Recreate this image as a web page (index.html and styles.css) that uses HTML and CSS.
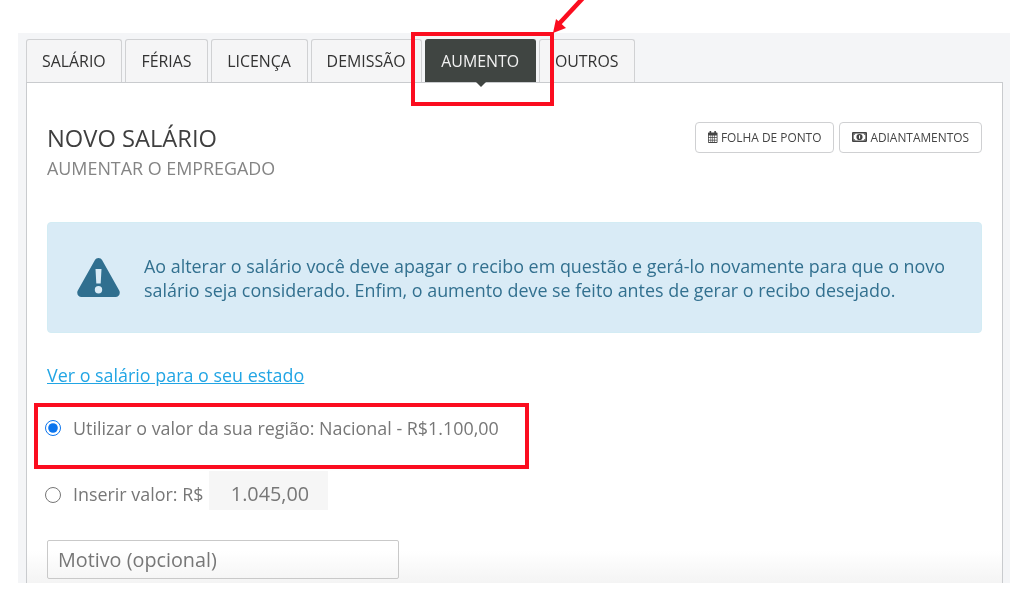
FILE: index.html
```html
<!DOCTYPE html>
<html lang="pt-BR">
<head>
<meta charset="utf-8">
<title>Novo salário</title>
<link rel="stylesheet" href="styles.css">
</head>
<body>
<div class="shell">
  <nav class="tabs">
    <a class="tab">SALÁRIO</a>
    <a class="tab">FÉRIAS</a>
    <a class="tab">LICENÇA</a>
    <a class="tab">DEMISSÃO</a>
    <a class="tab active">AUMENTO</a>
    <a class="tab">OUTROS</a>
  </nav>
  <main class="panel">
    <header class="head">
      <div>
        <h1 class="title">NOVO SALÁRIO</h1>
        <p class="subtitle">AUMENTAR O EMPREGADO</p>
      </div>
      <div class="actions">
        <button class="btn">
          <svg class="btn-icon" width="9.500" height="12" viewBox="0 0 12 13" preserveAspectRatio="none"><path fill="#444" fill-rule="evenodd" d="M2 0h2v1.500h4V0h2v1.500h1.200c.5 0 .8.300.8.800V12c0 .6-.4 1-1 1H1c-.6 0-1-.4-1-1V2.300c0-.5.300-.8.800-.8H2zM1 5v1.800h2.200V5zm3 0v1.800h1.600V5zm2.400 0v1.800H8V5zm2.400 0v1.800H11V5zM1 7.600v1.800h2.200V7.600zm3 0v1.800h1.600V7.600zm2.400 0v1.800H8V7.600zm2.400 0v1.800H11V7.600zM1 10.200V12h2.200v-1.800zm3 0V12h1.600v-1.800zm2.400 0V12H8v-1.800zm2.400 0V12H11v-1.800z"/></svg>
          FOLHA DE PONTO
        </button>
        <button class="btn">
          <svg class="btn-icon" width="15" height="10" viewBox="0 0 15 11" preserveAspectRatio="none"><path fill="#444" fill-rule="evenodd" d="M1 0h13c.6 0 1 .4 1 1v9c0 .6-.4 1-1 1H1c-.6 0-1-.4-1-1V1c0-.6.4-1 1-1zm.6 1.600v7.800h11.800V1.600z"/><ellipse cx="7.500" cy="5.500" rx="3.100" ry="3.400" fill="#444"/><rect x="7" y="3.700" width="1.100" height="3.600" fill="#fff"/><path fill="#444" d="M1.600 1.600h2.200L1.600 3.800zm11.800 0v2.200l-2.200-2.200zM1.600 9.400V7.200l2.200 2.200zm11.800 0h-2.200l2.200-2.200z"/></svg>
          ADIANTAMENTOS
        </button>
      </div>
    </header>

    <section class="alert">
      <svg class="alert-icon" width="43" height="39" viewBox="0 0 43 39"><path fill="#306f8f" fill-rule="evenodd" d="M17.800 2.200c1.700-2.900 5.700-2.900 7.400 0l17 30.300c1.600 2.900-.4 6.500-3.700 6.500H4.500C1.200 39-.8 35.400.8 32.500zM18.500 11l.8 14.500h4.400l.8-14.500zM21.500 28a3.700 3.700 0 1 0 0 7.400 3.700 3.700 0 0 0 0-7.400z"/></svg>
      <p class="alert-text">Ao alterar o salário você deve apagar o recibo em questão e gerá-lo novamente para que o novo salário seja considerado. Enfim, o aumento deve se feito antes de gerar o recibo desejado.</p>
    </section>

    <a class="state-link">Ver o salário para o seu estado</a>

    <label class="option option-region">
      <input class="radio" type="radio" name="valor" checked>
      <span>Utilizar o valor da sua região: Nacional - R$1.100,00</span>
    </label>
    <label class="option option-custom">
      <input class="radio radio-low" type="radio" name="valor">
      <span class="label-low">Inserir valor: R$</span>
      <span class="amount">1.045,00</span>
    </label>
    <div class="reason">Motivo (opcional)</div>
  </main>
</div>

<div class="mark mark-tab"></div>
<div class="mark mark-option"></div>
<svg class="arrow" width="40" height="36" viewBox="0 0 40 36"><path d="M33 -2 L7 26" stroke="#fb0d1f" stroke-width="4.500" fill="none"/><path fill="#fb0d1f" d="M3 33 L6 19 L16 28z"/></svg>
</body>
</html>
```
FILE: styles.css
```css
* { box-sizing: border-box; }
html, body { margin: 0; height: 607px; overflow: hidden; background: #fff; }
body { font-family: "Open Sans", sans-serif; padding: 33px 14px 24px 18px; position: relative; }

.shell {
  height: 550px;
  background: #f4f5f7;
  padding: 6px 7px 0 8px;
  display: flex;
  flex-direction: column;
  overflow: hidden;
  filter: blur(0.35px);
}

.tabs { display: flex; gap: 3px; height: 43px; flex: none; }
.tab {
  display: flex;
  align-items: center;
  justify-content: center;
  padding: 0 15.750px 0 15px;
  font-size: 15.900px;
  color: #333;
  background: #f5f5f6;
  border: 1px solid #d0d1d3;
  border-bottom: 0;
  border-radius: 3px 3px 0 0;
  position: relative;
}
.tab.active { background: #404542; border-color: #404542; color: #f2f2f2; }
.tab.active::after {
  content: "";
  position: absolute;
  left: 50%;
  bottom: -5px;
  margin-left: -5px;
  border: 5px solid transparent;
  border-top-color: #404542;
  border-bottom: 0;
}

.panel {
  flex: 1;
  min-height: 0;
  background: linear-gradient(to bottom, #fff calc(100% - 32px), #f4f4f4 100%);
  border: 1px solid #c9cbce;
  border-bottom: 0;
  padding: 39px 20px 0;
}

.head { display: flex; justify-content: space-between; align-items: flex-start; height: 100px; }
.title { margin: -2px 0 0; font-size: 23.700px; line-height: 36px; font-weight: 400; color: #3f3f3f; }
.subtitle { margin: 0; font-size: 17.900px; line-height: 24px; color: #848484; }
.actions { display: flex; gap: 5px; }
.btn {
  height: 31px;
  padding: 0 12px 2px;
  display: flex;
  align-items: center;
  gap: 3px;
  font: 11.900px "Open Sans", sans-serif;
  color: #444;
  background: #fff;
  border: 1px solid #cfd0d2;
  border-radius: 4px;
}
.btn-icon { flex: none; margin-top: 1px; }

.alert {
  height: 111px;
  display: flex;
  align-items: center;
  gap: 24px;
  padding: 0 29px;
  background: #d9ebf6;
  border: 1px solid #d3ecf4;
  border-radius: 4px;
  color: #32708f;
}
.alert-icon { flex: none; }
.alert-text { margin: 0; font-size: 17.900px; line-height: 24px; }

.state-link {
  display: block;
  margin-top: 30px;
  font-size: 17.900px;
  line-height: 24px;
  color: #22a5e4;
  text-decoration: underline;
}

.option { display: flex; align-items: center; font-size: 17.900px; color: #777; }
.option-region { height: 24px; margin-top: 29px; margin-left: -2px; }
.option-custom { height: 39px; margin-top: 31px; margin-left: -2px; }
.radio { width: 16px; height: 16px; margin: 0 12px 0 0; flex: none; accent-color: #0b75ee; }
.radio-low { margin-top: 8px; }
.label-low { margin-top: 7px; }
.amount {
  width: 119px;
  height: 39px;
  margin-left: 6px;
  padding: 6px 0 0 2px;
  background: #f6f6f6;
  display: flex;
  align-items: center;
  justify-content: center;
  font-size: 19.800px;
}

.reason {
  width: 352px;
  height: 39px;
  margin-top: 30px;
  padding: 0 10px;
  display: flex;
  align-items: center;
  font-size: 19.800px;
  color: #777;
  border: 1px solid #c9c9c9;
  border-radius: 2px;
}

.mark { position: absolute; border: 4px solid #fb0d1f; }
.mark-tab { left: 411px; top: 32px; width: 143px; height: 73.500px; }
.mark-option { left: 34px; top: 403px; width: 495px; height: 66px; }
.arrow { position: absolute; left: 550px; top: 0; overflow: visible; }
```
